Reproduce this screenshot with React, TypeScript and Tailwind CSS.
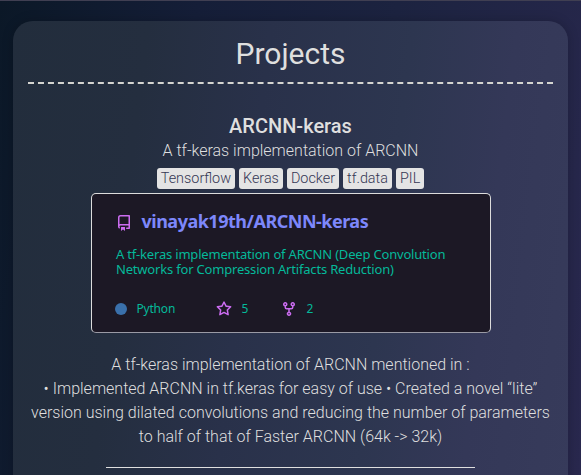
import React from "react";

const tags = ["Tensorflow", "Keras", "Docker", "tf.data", "PIL"];

const repoPath =
  "M2 2.5A2.5 2.5 0 014.5 0h8.75a.75.75 0 01.75.75v12.5a.75.75 0 01-.75.75h-2.5a.75.75 0 110-1.5h1.75v-2h-8a1 1 0 00-.714 1.7.75.75 0 01-1.072 1.05A2.495 2.495 0 012 11.5v-9zm10.5-1V9h-8c-.356 0-.694.074-1 .208V2.5a1 1 0 011-1h8zM5 12.25v3.25a.25.25 0 00.4.2l1.45-1.087a.25.25 0 01.3 0L8.6 15.7a.25.25 0 00.4-.2v-3.25a.25.25 0 00-.25-.25h-3.5a.25.25 0 00-.25.25z";
const starPath =
  "M8 .25a.75.75 0 01.673.418l1.882 3.815 4.21.612a.75.75 0 01.416 1.279l-3.046 2.97.719 4.192a.75.75 0 01-1.088.791L8 12.347l-3.766 1.98a.75.75 0 01-1.088-.79l.72-4.194L.818 6.374a.75.75 0 01.416-1.28l4.21-.611L7.327.668A.75.75 0 018 .25zm0 2.445L6.615 5.5a.75.75 0 01-.564.41l-3.097.45 2.24 2.184a.75.75 0 01.216.664l-.528 3.084 2.769-1.456a.75.75 0 01.698 0l2.77 1.456-.53-3.084a.75.75 0 01.216-.664l2.24-2.183-3.096-.45a.75.75 0 01-.564-.41L8 2.694v.001z";
const forkPath =
  "M5 3.25a.75.75 0 11-1.5 0 .75.75 0 011.5 0zm0 2.122a2.25 2.25 0 10-1.5 0v.878A2.25 2.25 0 005.75 8.5h1.5v2.128a2.251 2.251 0 101.5 0V8.5h1.5a2.25 2.25 0 002.25-2.25v-.878a2.25 2.25 0 10-1.5 0v.878a.75.75 0 01-.75.75h-4.5A.75.75 0 015 6.25v-.878zm3.75 7.378a.75.75 0 11-1.5 0 .75.75 0 011.5 0zm3-8.75a.75.75 0 100-1.5.75.75 0 000 1.5z";

function Icon({ d }: { d: string }) {
  return (
    <svg viewBox="0 0 16 16" className="size-4 shrink-0 fill-[#cb6cf0]" aria-hidden="true">
      <path fillRule="evenodd" d={d} />
    </svg>
  );
}

function RepoCard() {
  return (
    <div className="mx-auto mt-1 h-[140px] w-[400px] rounded-[5px] border border-[#dcdcdc] border-b-[#9a9aa5] bg-[#1c1825] pt-[14px] pl-6 text-left font-['Noto_Sans',sans-serif] text-[#04b99a]">
      <div className="flex h-[27px] items-start">
        <div className="pt-[7px]">
          <Icon d={repoPath} />
        </div>
        <span className="ml-[10px] text-[18px] leading-[26px] font-bold tracking-[-0.5px] whitespace-nowrap text-[#7d87fb]">
          vinayak19th/ARCNN-keras
        </span>
      </div>
      <p className="mt-[12px] ml-[0.5px] text-[13px] leading-[15px] tracking-[-0.19px] whitespace-nowrap">
        A tf-keras implementation of ARCNN (Deep Convolution
        <br />
        Networks for Compression Artifacts Reduction)
      </p>
      <div className="mt-[24px] flex h-4 items-center text-[12px] leading-4">
        <span className="ml-[-1px] size-3 rounded-full bg-[#3a70ab]" />
        <span className="ml-[10px] w-[79px] tracking-[-0.2px]">Python</span>
        <Icon d={starPath} />
        <span className="ml-[10px] w-[39px]">5</span>
        <Icon d={forkPath} />
        <span className="ml-[10px]">2</span>
      </div>
    </div>
  );
}

export default function App() {
  return (
    <div className="h-[475px] overflow-hidden border-t border-[#403f52] bg-linear-[100deg,#0b1827_0%,#151e38_30%,#1c2340_60%,#29284e_100%] px-[13px] pt-5 font-[Roboto,sans-serif] text-[#dfdfdf]">
      <main className="h-[500px] rounded-[20px] bg-linear-[97deg,#222d3c_0%,#242e3f_22%,#29314a_42%,#2d3650_65%,#343858_82%,#373b5b_100%] px-[15px] pt-[12px] text-center shadow-[0_0_12px_rgba(0,0,0,0.2)]">
        <h1 className="border-b-2 border-dashed border-[#d5d5d0] pb-[7px] text-[30px] leading-[42px]">Projects</h1>
        <h2 className="mt-[30px] text-[20px] leading-6 font-medium">ARCNN-keras</h2>
        <p className="mt-px text-[16px] leading-6 font-light">A tf-keras implementation of ARCNN</p>
        <div className="mt-[5px] flex justify-center gap-1">
          {tags.map((tag) => (
            <span
              key={tag}
              className="h-[21px] rounded-[3px] bg-[#e4e4e4] px-1 text-[14.4px] leading-[21px] font-light text-[#353754]"
            >
              {tag}
            </span>
          ))}
        </div>
        <RepoCard />
        <p className="mt-5 text-[16px] leading-6 font-light">
          A tf-keras implementation of ARCNN mentioned in :<br />
          • Implemented ARCNN in tf.keras for easy of use • Created a novel “lite”
          <br />
          version using dilated convolutions and reducing the number of parameters
          <br />
          to half of that of Faster ARCNN (64k -&gt; 32k)
        </p>
        <hr className="mx-auto mt-[18px] w-[369px] border-[#dfdfdf]" />
      </main>
    </div>
  );
}
